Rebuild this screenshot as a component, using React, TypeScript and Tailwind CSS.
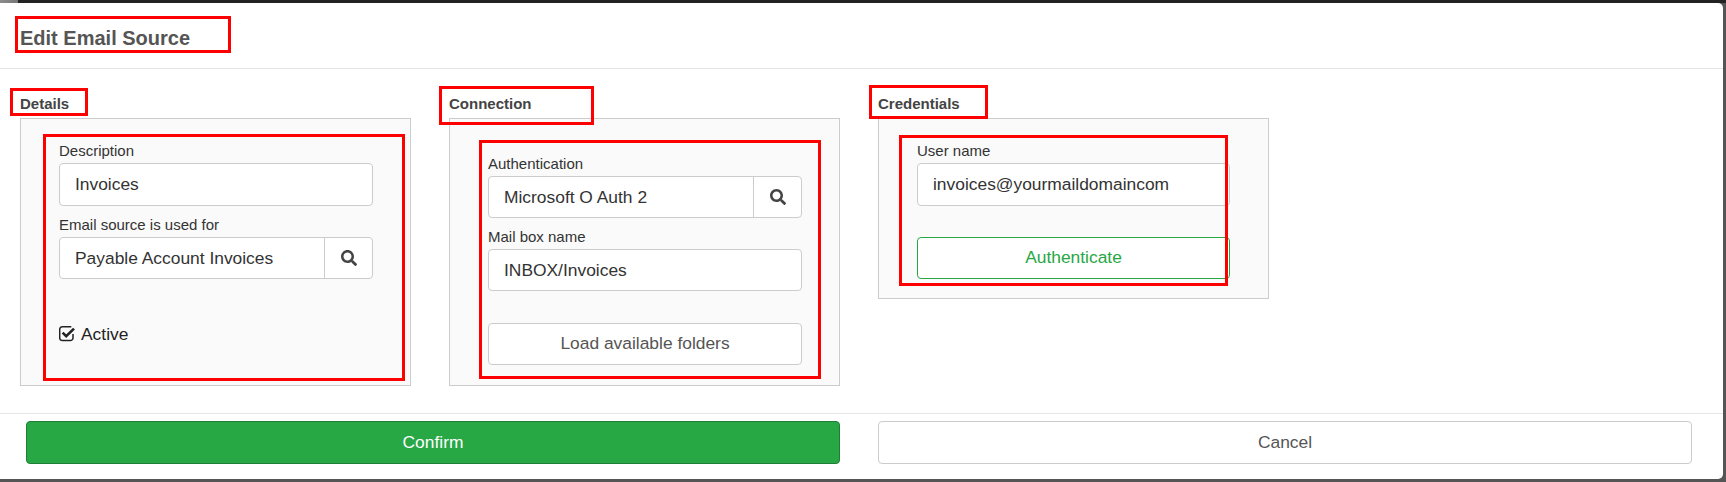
import React from 'react';
import { FaSearch } from 'react-icons/fa';

const inputBox =
  'flex items-center w-full bg-white border border-[#ccc] rounded-[4px] pl-[15px] text-[17.4px] text-[#333]';

const Label = ({ text }: { text: string }) => (
  <div className="h-[20px] leading-[20px] text-[15px] text-[#333]">{text}</div>
);

const SearchInput = ({ value, height }: { value: string; height: string }) => (
  <div className={`flex w-full bg-white border border-[#ccc] rounded-[4px] text-[17.4px] text-[#333] ${height}`}>
    <div className="flex-1 flex items-center pl-[15px]">{value}</div>
    <div className="w-[48px] flex items-center justify-center border-l border-[#ccc]">
      <FaSearch size={16} className="text-[#444]" />
    </div>
  </div>
);

const CheckIcon = () => (
  <svg width="16" height="16" viewBox="0 0 16 16" fill="none" stroke="#222" className="shrink-0">
    <path d="M14 8v4a2.6 2.6 0 0 1-2.6 2.6H3.1A2.6 2.6 0 0 1 .7 12V3.4A2.6 2.6 0 0 1 3.1 .8h9.2" strokeWidth="1.5" />
    <path d="M3.6 6.6l3.6 3.6L15 2.6" strokeWidth="2.6" />
  </svg>
);

const Marker = ({ className }: { className: string }) => (
  <div className={`absolute border-[3px] border-[#ff0000] pointer-events-none ${className}`} />
);

const App: React.FC = () => {
  return (
    <div
      className="relative flex flex-col w-[1726px] h-[482px] overflow-hidden bg-[#555]"
      style={{ fontFamily: '"Liberation Sans", Arial, sans-serif' }}
    >
      {/* Window edge above the dialog */}
      <div className="flex h-[3px] shrink-0">
        <div className="w-[18px] bg-gradient-to-r from-[#8c8c8c] to-[#777]" />
        <div className="flex-1 bg-[#222]" />
      </div>

      <div className="flex-1 min-h-0 pr-[3px] pb-[3px]">
        <div className="flex flex-col h-full bg-white rounded-tr-[5px] rounded-br-[5px]">
          {/* Header */}
          <div className="h-[66px] shrink-0 border-b border-[#e5e5e5] pl-[20px] pt-[23px]">
            <h1 className="text-[20px] leading-[24px] font-bold text-[#555]">Edit Email Source</h1>
          </div>

          {/* Sections */}
          <div className="flex-1 flex items-start gap-[38px] pl-[20px] pt-[25px]">
            <section className="w-[391px]">
              <h2 className="h-[24px] leading-[20px] text-[15px] font-bold text-[#444]">Details</h2>
              <div className="h-[268px] bg-[#fafafa] border border-[#ccc] pl-[38px] pr-[37px] pt-[22px]">
                <Label text="Description" />
                <div className={`${inputBox} h-[43px] mt-[2px]`}>Invoices</div>
                <div className="mt-[9px]">
                  <Label text="Email source is used for" />
                </div>
                <div className="mt-[2px]">
                  <SearchInput value="Payable Account Invoices" height="h-[42px]" />
                </div>
                <div className="flex items-center gap-[6px] h-[24px] mt-[43px] text-[17.4px] text-[#222]">
                  <CheckIcon />
                  Active
                </div>
              </div>
            </section>

            <section className="w-[391px]">
              <h2 className="h-[24px] leading-[20px] text-[15px] font-bold text-[#444]">Connection</h2>
              <div className="h-[268px] bg-[#fafafa] border border-[#ccc] pl-[38px] pr-[37px] pt-[35px]">
                <Label text="Authentication" />
                <div className="mt-[2px]">
                  <SearchInput value="Microsoft O Auth 2" height="h-[42px]" />
                </div>
                <div className="mt-[9px]">
                  <Label text="Mail box name" />
                </div>
                <div className={`${inputBox} h-[42px] mt-[2px]`}>INBOX/Invoices</div>
                <button className="block w-full h-[42px] mt-[32px] pb-[1px] bg-white border border-[#ccc] rounded-[4px] text-[17.4px] text-[#555]">
                  Load available folders
                </button>
              </div>
            </section>

            <section className="w-[391px]">
              <h2 className="h-[24px] leading-[20px] text-[15px] font-bold text-[#444]">Credentials</h2>
              <div className="bg-[#fafafa] border border-[#ccc] pl-[38px] pr-[38px] pt-[22px] pb-[19px]">
                <Label text="User name" />
                <div className={`${inputBox} h-[43px] mt-[2px]`}>invoices@yourmaildomaincom</div>
                <button className="block w-full h-[42px] mt-[31px] pb-[1px] bg-white border border-[#28a745] rounded-[4px] text-[17.4px] text-[#28a745]">
                  Authenticate
                </button>
              </div>
            </section>
          </div>

          {/* Footer */}
          <div className="h-[66px] shrink-0 border-t border-[#e5e5e5] flex gap-[38px] pl-[26px] pr-[31px] pt-[7px]">
            <button className="w-[814px] h-[43px] pb-[1px] bg-[#28a745] border border-[#1e7e34] rounded-[4px] text-[17.4px] text-white">
              Confirm
            </button>
            <button className="w-[814px] h-[43px] pb-[1px] bg-white border border-[#ccc] rounded-[4px] text-[17.4px] text-[#555]">
              Cancel
            </button>
          </div>
        </div>
      </div>

      {/* Annotations drawn over the screenshot */}
      <Marker className="left-[15px] top-[16px] w-[216px] h-[37px]" />
      <Marker className="left-[10px] top-[88px] w-[78px] h-[28px]" />
      <Marker className="left-[43px] top-[134px] w-[362px] h-[247px]" />
      <Marker className="left-[439px] top-[86px] w-[155px] h-[39px]" />
      <Marker className="left-[479px] top-[140px] w-[342px] h-[239px]" />
      <Marker className="left-[869px] top-[85px] w-[119px] h-[34px]" />
      <Marker className="left-[899px] top-[135px] w-[329px] h-[151px]" />
    </div>
  );
};

export default App;
